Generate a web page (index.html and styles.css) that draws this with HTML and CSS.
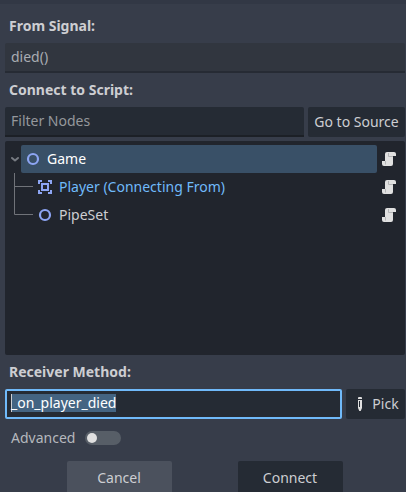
FILE: index.html
```html
<!DOCTYPE html>
<html lang="en">
<head>
<meta charset="utf-8">
<title>Connect a Signal</title>
<link rel="stylesheet" href="styles.css">
</head>
<body>
<svg class="defs" aria-hidden="true">
  <symbol id="script" viewBox="0 0 16 16">
    <path d="M6 1a2 2 0 0 0-2 2v7H1v3a2 2 0 0 0 2 2h7a2 2 0 0 0 2-2V5h3V3a2 2 0 0 0-2-2z" fill="#e0e0e0"/>
    <path d="M7.5 2v3.5H12M4.5 10v3.5" fill="none" stroke="#b4b5b7"/>
  </symbol>
  <symbol id="node" viewBox="0 0 16 16">
    <circle cx="8" cy="8" r="5" fill="none" stroke="#8da5f3" stroke-width="2.2"/>
  </symbol>
</svg>
<div class="strip"></div>
<main class="dialog">
  <h2 class="label">From Signal:</h2>
  <div class="field readonly">died()</div>
  <h2 class="label">Connect to Script:</h2>
  <div class="row">
    <div class="field filter">Filter Nodes</div>
    <div class="button source">Go to Source</div>
  </div>
  <div class="tree">
    <div class="item">
      <svg class="arrow" viewBox="0 0 16 28"><path d="M7 13l3 2.5 3-2.5" fill="none" stroke="#777b82" stroke-width="2" stroke-linecap="round" stroke-linejoin="round"/></svg>
      <div class="name selected"><svg class="icon"><use href="#node"/></svg>Game</div>
      <svg class="icon script"><use href="#script"/></svg>
    </div>
    <div class="item">
      <svg class="branch" viewBox="0 0 28 28"><path d="M9.5 0v28M9 13.5h19" fill="none" stroke="#707379"/></svg>
      <div class="name child link"><svg class="icon" viewBox="0 0 16 16"><path d="M5 2H2v3M11 2h3v3M5 14H2v-3M11 14h3v-3M5 5h6v6H5z" fill="none" stroke="#8da5f3" stroke-width="2"/></svg>Player (Connecting From)</div>
      <svg class="icon script"><use href="#script"/></svg>
    </div>
    <div class="item">
      <svg class="branch" viewBox="0 0 28 28"><path d="M9.5 0v13.5H28" fill="none" stroke="#707379"/></svg>
      <div class="name child"><svg class="icon"><use href="#node"/></svg>PipeSet</div>
      <svg class="icon script"><use href="#script"/></svg>
    </div>
  </div>
  <h2 class="label">Receiver Method:</h2>
  <div class="row">
    <div class="field method"><span class="selection">_on_player_died</span></div>
    <div class="button pick"><svg class="icon" viewBox="0 0 16 16"><path d="M6 2a1 1 0 0 1 1-1h2a1 1 0 0 1 1 1v1H6z" fill="#e0e0e0"/><path d="M6 4h4v8l-1.3 3H7.3L6 12zM7 5v6h1V5z" fill="#e0e0e0" fill-rule="evenodd"/></svg>Pick</div>
  </div>
  <div class="advanced">Advanced<span class="toggle"></span></div>
  <div class="actions">
    <div class="button cancel">Cancel</div>
    <div class="button">Connect</div>
  </div>
</main>
</body>
</html>
```
FILE: styles.css
```css
* { box-sizing: border-box; }
body {
  margin: 0;
  height: 492px;
  overflow: hidden;
  background: #373d4a;
  color: #cdced2;
  font: 14px/20px "Noto Sans", sans-serif;
}
.defs { position: absolute; width: 0; height: 0; }
.strip { height: 4px; background: #323845; }
.dialog { padding: 5px 1px 0 5px; }
.label {
  margin: 0;
  height: 34px;
  padding-left: 4px;
  font-size: 14px;
  line-height: 34px;
  font-weight: 700;
}
.row { display: flex; gap: 4px; }
.field {
  height: 30px;
  padding: 0 6px;
  line-height: 28px;
  border-radius: 2px 2px 0 0;
  border-bottom: 2px solid #1c2026;
  background: #252b34;
}
.readonly { background: #31363f; border-color: #262b34; color: #a9acb2; }
.filter { width: 299px; color: #95989c; }
.button {
  display: flex;
  align-items: center;
  justify-content: center;
  height: 30px;
  border-radius: 2px;
  background: #252b34;
}
.source { width: 97px; }
.tree {
  height: 214px;
  margin-top: 4px;
  padding-top: 4px;
  border-radius: 2px;
  background: #21252d;
}
.item { display: flex; align-items: center; height: 28px; }
.icon { display: block; flex: none; width: 16px; height: 16px; }
.arrow { width: 16px; height: 28px; }
.branch { width: 28px; height: 28px; }
.name {
  display: flex;
  align-items: center;
  gap: 6px;
  width: 356px;
  height: 28px;
  padding-left: 4px;
  border-radius: 2px;
}
.child { width: 344px; }
.selected { background: #395067; color: #fff; }
.link { color: #70bafa; }
.script { margin-left: 4px; }
.method {
  width: 337px;
  padding: 3px 4px 0;
  line-height: 18px;
  border: 2px solid #70bafa;
  border-radius: 2px;
}
.selection {
  display: inline-block;
  height: 18px;
  background: #446482;
  box-shadow: inset 1px 0 #cdced2;
  color: #fff;
}
.pick { width: 59px; gap: 4px; }
.advanced {
  display: flex;
  align-items: center;
  gap: 10px;
  height: 38px;
  padding-left: 6px;
  color: #b5b8bd;
}
.toggle {
  width: 36px;
  height: 14px;
  padding: 2px;
  border-radius: 7px;
  background: #575e67;
}
.toggle::before {
  content: "";
  display: block;
  width: 10px;
  height: 10px;
  border-radius: 50%;
  background: #e0e0e0;
}
.actions { display: flex; gap: 66px; padding: 4px 0 0 62px; }
.actions .button { width: 105px; height: 34px; padding-right: 1px; }
.actions .cancel { background: #4b515d; }
```
